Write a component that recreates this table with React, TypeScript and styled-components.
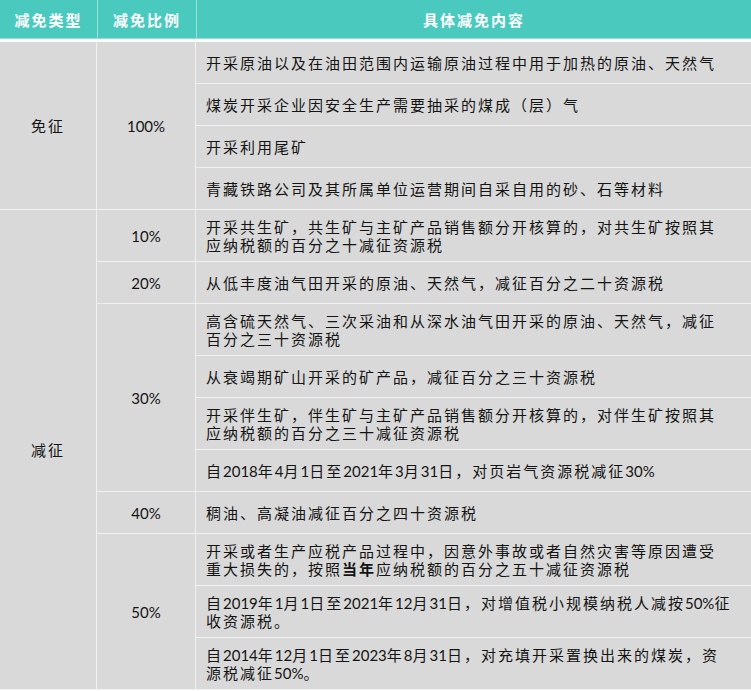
import React from 'react';
import styled, { createGlobalStyle } from 'styled-components';

const GlobalStyle = createGlobalStyle`
  html, body { margin: 0; padding: 0; background: #ffffff; }
  body { font-family: "Noto Sans CJK SC", "Noto Sans", sans-serif; }
`;

const LINE = '#f0f0f0';

const Table = styled.div`
  width: 751px;
  background: #d9d9d9;
  color: #141414;
  font-size: 15px;
`;

const Header = styled.div`
  display: grid;
  grid-template-columns: 97px 99px 1fr;
  height: 38px;
  background: #4ac9be;
  border-bottom: 1px solid #93ddd6;
  border-top: 0;
`;

const HeaderCell = styled.div`
  display: flex;
  align-items: center;
  justify-content: center;
  color: #ffffff;
  font-weight: 700;
  letter-spacing: 2px;
  & + & {
    border-left: 1px solid rgba(255, 255, 255, 0.45);
  }
`;

const Body = styled.div`
  border-top: 3px solid #ffffff;
`;

const Group = styled.div`
  display: flex;
`;

const TypeCell = styled.div`
  box-sizing: border-box;
  width: 97px;
  flex-shrink: 0;
  display: flex;
  align-items: center;
  justify-content: center;
  letter-spacing: 2px;
  border-right: 1px solid ${LINE};
  border-bottom: 1px solid ${LINE};
`;

const SubGroups = styled.div`
  flex: 1;
  display: flex;
  flex-direction: column;
`;

const SubGroup = styled.div`
  display: flex;
`;

const RateCell = styled.div`
  box-sizing: border-box;
  width: 99px;
  flex-shrink: 0;
  display: flex;
  align-items: center;
  justify-content: center;
  border-right: 1px solid ${LINE};
  border-bottom: 1px solid ${LINE};
`;

const Items = styled.div`
  flex: 1;
  display: flex;
  flex-direction: column;
`;

const Item = styled.div<{ $lines: number }>`
  box-sizing: border-box;
  height: ${(p) => (p.$lines > 1 ? 52 : 42)}px;
  display: flex;
  flex-direction: column;
  justify-content: center;
  padding-left: 10px;
  border-bottom: 1px solid ${LINE};
`;

const TextLine = styled.div`
  line-height: 18px;
  white-space: nowrap;
  letter-spacing: 2px;
`;

const Num = styled.span`
  font-family: Lato, "Noto Sans", sans-serif;
  letter-spacing: 0;
`;

const Strong = styled.b`
  font-weight: 700;
`;

function renderRuns(s: string, keyBase: string): React.ReactNode[] {
  const out: React.ReactNode[] = [];
  const re = /[0-9%]+/g;
  let last = 0;
  let m: RegExpExecArray | null;
  let i = 0;
  while ((m = re.exec(s))) {
    if (m.index > last) out.push(s.slice(last, m.index));
    out.push(<Num key={`${keyBase}-${i++}`}>{m[0]}</Num>);
    last = m.index + m[0].length;
  }
  if (last < s.length) out.push(s.slice(last));
  return out;
}

function renderLine(s: string, key: string) {
  const parts = s.split('**');
  return (
    <TextLine key={key}>
      {parts.map((p, idx) =>
        idx % 2 === 1 ? (
          <Strong key={idx}>{renderRuns(p, `${key}-b${idx}`)}</Strong>
        ) : (
          <React.Fragment key={idx}>{renderRuns(p, `${key}-n${idx}`)}</React.Fragment>
        )
      )}
    </TextLine>
  );
}

type Rate = { rate: string; items: string[][] };
type Kind = { type: string; rates: Rate[] };

const data: Kind[] = [
  {
    type: '免征',
    rates: [
      {
        rate: '100%',
        items: [
          ['开采原油以及在油田范围内运输原油过程中用于加热的原油、天然气'],
          ['煤炭开采企业因安全生产需要抽采的煤成（层）气'],
          ['开采利用尾矿'],
          ['青藏铁路公司及其所属单位运营期间自采自用的砂、石等材料'],
        ],
      },
    ],
  },
  {
    type: '减征',
    rates: [
      {
        rate: '10%',
        items: [['开采共生矿，共生矿与主矿产品销售额分开核算的，对共生矿按照其', '应纳税额的百分之十减征资源税']],
      },
      { rate: '20%', items: [['从低丰度油气田开采的原油、天然气，减征百分之二十资源税']] },
      {
        rate: '30%',
        items: [
          ['高含硫天然气、三次采油和从深水油气田开采的原油、天然气，减征', '百分之三十资源税'],
          ['从衰竭期矿山开采的矿产品，减征百分之三十资源税'],
          ['开采伴生矿，伴生矿与主矿产品销售额分开核算的，对伴生矿按照其', '应纳税额的百分之三十减征资源税'],
          ['自2018年4月1日至2021年3月31日，对页岩气资源税减征30%'],
        ],
      },
      { rate: '40%', items: [['稠油、高凝油减征百分之四十资源税']] },
      {
        rate: '50%',
        items: [
          ['开采或者生产应税产品过程中，因意外事故或者自然灾害等原因遭受', '重大损失的，按照**当年**应纳税额的百分之五十减征资源税'],
          ['自2019年1月1日至2021年12月31日，对增值税小规模纳税人减按50%征', '收资源税。'],
          ['自2014年12月1日至2023年8月31日，对充填开采置换出来的煤炭，资', '源税减征50%。'],
        ],
      },
    ],
  },
];

export default function App() {
  return (
    <>
      <GlobalStyle />
      <Table>
        <Header>
          <HeaderCell>减免类型</HeaderCell>
          <HeaderCell>减免比例</HeaderCell>
          <HeaderCell>具体减免内容</HeaderCell>
        </Header>
        <Body>
          {data.map((g) => (
            <Group key={g.type}>
              <TypeCell>{g.type}</TypeCell>
              <SubGroups>
                {g.rates.map((r) => (
                  <SubGroup key={r.rate}>
                    <RateCell>{renderRuns(r.rate, r.rate)}</RateCell>
                    <Items>
                      {r.items.map((lines, i) => (
                        <Item key={i} $lines={lines.length}>
                          {lines.map((l, j) => renderLine(l, `${r.rate}-${i}-${j}`))}
                        </Item>
                      ))}
                    </Items>
                  </SubGroup>
                ))}
              </SubGroups>
            </Group>
          ))}
        </Body>
      </Table>
    </>
  );
}
